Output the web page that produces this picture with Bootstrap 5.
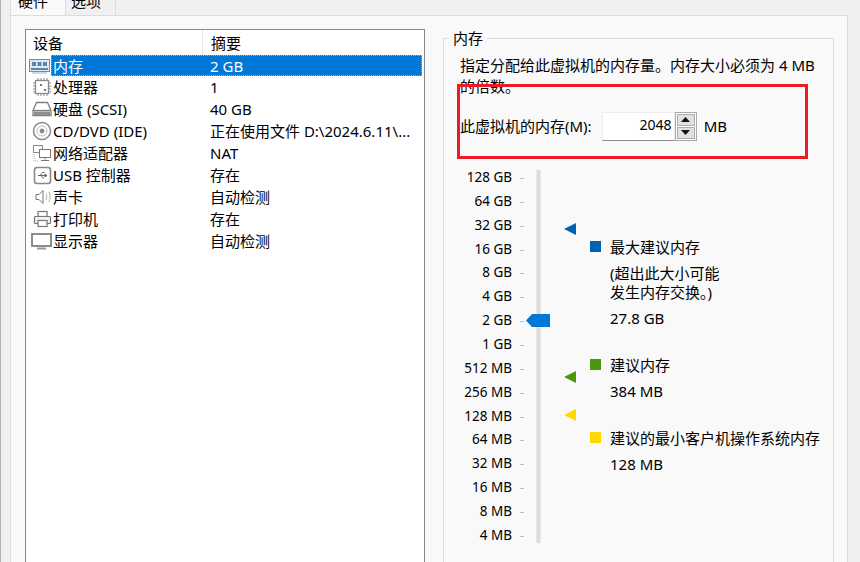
<!DOCTYPE html>
<html lang="zh">
<head>
<meta charset="utf-8">
<title>虚拟机设置</title>
<link href="https://cdn.jsdelivr.net/npm/bootstrap@5.3.0/dist/css/bootstrap.min.css" rel="stylesheet">
<style>
html,body{margin:0;height:562px;overflow:hidden;background:#f0f0f0;}
body{font-family:"Noto Sans","Noto Sans CJK SC",sans-serif;font-size:15px;line-height:20px;color:#000;}
.shell{width:860px;height:562px;position:relative;overflow:hidden;border-left:1px solid #b4b4b4;}
.tabstrip{height:15px;padding-left:9px;}
.vmtab{height:15px;line-height:0;padding:0 0 0 7px;border-right:1px solid #dcdcdc;overflow:visible;white-space:nowrap;}
.vmtab span{display:inline-block;transform:translateY(-6px);line-height:14px;}
.vmtab.on{width:56px;background:#f9f9f9;border-left:1px solid #dcdcdc;}
.vmtab.off{width:50px;padding-left:5px;}
.stage{width:838px;height:547px;margin-left:9px;background:#f9f9f9;border-left:1px solid #dcdcdc;border-right:1px solid #dcdcdc;padding:13px 0 0 14px;gap:18px;border-top:1px solid #dcdcdc;}
.devlist{width:400px;height:540px;background:#fff;border:1px solid #828790;flex:none;}
.devhead{height:25px;align-items:center;}
.devhead .c1{border-right:1px solid #e5e5e5;height:25px;line-height:26px;}
.c1{width:177px;padding-left:7px;flex:none;}
.c2{padding-left:8px;white-space:nowrap;}
.devrow{height:22px;line-height:22px;align-items:center;position:relative;}
.devrow .ic{width:27px;flex:none;height:22px;display:flex;align-items:center;justify-content:flex-end;padding-right:1px;}
.devrow .nm{width:157px;flex:none;white-space:nowrap;}
.devrow .vl{white-space:nowrap;}
.devrow.sel{background:#0078d7;color:#fff;outline:1px dotted #f5a623;outline-offset:-1px;margin-left:25px;padding-left:2px;height:21px;margin-right:2px;}
.devrow.sel .nm{width:157px;}
.selicon{position:absolute;left:-25px;top:0;width:25px;height:21px;display:flex;align-items:center;justify-content:flex-end;padding-right:1px;}
.memgroup{width:391px;height:540px;margin-top:9px;border:1px solid #dcdcdc;position:relative;padding:16px 15px 0 16px;flex:none;}
.grouptitle{position:absolute;left:5px;top:-11px;padding:0 4px;background:#f9f9f9;line-height:20px;}
.desc{width:360px;line-height:21px;height:42px;overflow:hidden;}
.memrow{margin-top:13px;height:32px;align-items:center;}
.spinbox{width:73px;height:29px;margin-left:10px;background:#fff;border:1px solid #eee;border-bottom:1px solid #8c8c8c;text-align:right;padding:0 2px 0 0;line-height:24px;font-size:14px;}
.spinbtns{width:22px;height:29px;border:1px solid #a9a9a9;background:#fff;padding:1px;gap:1px;flex:none;}
.spinbtns div{flex:1;background:#e1e1e1;border:1px solid #adadad;display:flex;align-items:center;justify-content:center;}
.unit{margin-left:7px;}
.chart{position:relative;height:390px;margin-top:28px;margin-left:-16px;}
.scale{position:absolute;left:0;top:-4px;width:80px;display:grid;grid-template-rows:repeat(16,23.87px);font-size:13.5px;}
.scale div{text-align:right;line-height:23.87px;white-space:nowrap;padding-right:12px;position:relative;}
.scale div::after{content:"";position:absolute;right:0;top:12px;width:4px;height:1px;background:#bdbdbd;}
.track{position:absolute;left:92px;top:0;width:5px;height:373px;background:#dcdcdc;border-left:1px solid #e8e8e8;border-right:1px solid #e8e8e8;}
.thumb{position:absolute;left:82px;top:144px;}
.ptr{position:absolute;left:120px;}
.legend{position:absolute;left:146px;top:67px;width:240px;}
.lgitem{padding-left:20px;position:relative;}
.swatch{position:absolute;left:0;top:4px;width:11px;height:11px;}
.sw-blue{background:#0063b1;}.sw-green{background:#4c980c;}.sw-yellow{background:#ffd800;}
.gap1{margin-top:7px;}
.gapv{margin-top:6px;}
.gaph{margin-top:27px;}
.note{line-height:19px;}
.alert-rect{position:absolute;left:456px;top:84px;width:351px;height:75px;border:3px solid #ed1c24;pointer-events:none;}
</style>
</head>
<body>
<div class="shell">
  <div class="tabstrip d-flex">
    <div class="vmtab on"><span>硬件</span></div>
    <div class="vmtab off"><span>选项</span></div>
  </div>
  <div class="stage d-flex">
    <div class="devlist">
      <div class="devhead d-flex"><div class="c1">设备</div><div class="c2">摘要</div></div>
      <div class="devrow sel d-flex">
        <div class="selicon"><svg width="21" height="16" viewBox="0 0 21 16"><rect x=".5" y="1.5" width="20" height="12" fill="#dceaf5" stroke="#6a8fb0"/><rect x="3" y="4" width="4" height="4" fill="#5b87ad"/><rect x="8.5" y="4" width="4" height="4" fill="#5b87ad"/><rect x="14" y="4" width="4" height="4" fill="#5b87ad"/><rect x="2" y="10" width="17" height="2" fill="#5b87ad"/><path d="M3 15h15" stroke="#9db4c7"/></svg></div>
        <div class="nm">内存</div><div class="vl">2 GB</div>
      </div>
      <div class="devrow d-flex"><div class="ic"><svg width="20" height="20" viewBox="0 0 20 20" fill="none" stroke="#8a8a8a"><rect x="3.500" y="3.500" width="13" height="13" stroke-width="1.300"/><path d="M6 1v2M9 1v2M12 1v2M15 1v2M6 17v2M9 17v2M12 17v2M15 17v2M1 6h2M1 9h2M1 12h2M1 15h2M17 6h2M17 9h2M17 12h2M17 15h2"/><rect x="8" y="7" width="2" height="2" fill="#777" stroke="none"/><rect x="12" y="12" width="2" height="2" fill="#777" stroke="none"/></svg></div><div class="nm">处理器</div><div class="vl">1</div></div>
      <div class="devrow d-flex"><div class="ic"><svg width="20" height="16" viewBox="0 0 20 16" fill="none" stroke="#808080" stroke-width="1.300"><path d="M4.500 1.500h11l3.500 8v5H1v-5z" fill="#fff"/><path d="M1 9.500h18"/><rect x="2" y="10.500" width="16" height="3.500" fill="#8f8f8f" stroke="none"/></svg></div><div class="nm">硬盘 (SCSI)</div><div class="vl">40 GB</div></div>
      <div class="devrow d-flex"><div class="ic"><svg width="20" height="20" viewBox="0 0 20 20" fill="none" stroke="#888"><circle cx="10" cy="10" r="8.500" stroke-width="1.500"/><circle cx="10" cy="10" r="5" stroke="#bbb"/><circle cx="10" cy="10" r="2" fill="#888"/></svg></div><div class="nm">CD/DVD (IDE)</div><div class="vl">正在使用文件 D:\2024.6.11\...</div></div>
      <div class="devrow d-flex"><div class="ic"><svg width="20" height="20" viewBox="0 0 20 20" fill="none" stroke="#777"><rect x="1.500" y="2.500" width="9" height="7" stroke="#888"/><rect x="7.500" y="6.500" width="11" height="8" fill="#fff"/><path d="M13 14.500v2M9 17.500h8"/><path d="M2 11v7h4" stroke="#aaa" stroke-dasharray="1 1"/></svg></div><div class="nm">网络适配器</div><div class="vl">NAT</div></div>
      <div class="devrow d-flex"><div class="ic"><svg width="19" height="19" viewBox="0 0 19 19" fill="none" stroke="#888"><rect x="1.500" y="1.500" width="16" height="16" rx="2.500" stroke-width="1.600"/><path d="M5 9.500h9M14 9.500l-2-1.500v3zM7 9.500l2.500-3h2M8 9.500l2 2.500h1" stroke="#666"/></svg></div><div class="nm">USB 控制器</div><div class="vl">存在</div></div>
      <div class="devrow d-flex"><div class="ic"><svg width="18" height="16" viewBox="0 0 18 16" fill="none" stroke="#777"><path d="M2 5.500h3l4-4v13l-4-4H2z" fill="#fff"/><path d="M12 5c1 2 1 4 0 6M15 3c1.500 3 1.500 7 0 10" stroke="#aaa"/></svg></div><div class="nm">声卡</div><div class="vl">自动检测</div></div>
      <div class="devrow d-flex"><div class="ic"><svg width="19" height="18" viewBox="0 0 19 18" fill="none" stroke="#777" stroke-width="1.200"><rect x="5" y="1.500" width="9" height="5" fill="#fff"/><rect x="1.500" y="6.500" width="16" height="7" rx="1" fill="#f2f2f2"/><rect x="5" y="10.500" width="9" height="6" fill="#fff"/></svg></div><div class="nm">打印机</div><div class="vl">存在</div></div>
      <div class="devrow d-flex"><div class="ic"><svg width="21" height="17" viewBox="0 0 21 17" fill="none" stroke="#808080"><rect x="1" y="1" width="19" height="12" fill="#fff" stroke-width="1.800"/><path d="M6 15.500h9" stroke="#999" stroke-width="2"/></svg></div><div class="nm">显示器</div><div class="vl">自动检测</div></div>
    </div>
    <div class="memgroup">
      <div class="grouptitle">内存</div>
      <div class="desc">指定分配给此虚拟机的内存量。内存大小必须为 4 MB 的倍数。</div>
      <div class="memrow d-flex">
        <div>此虚拟机的内存(M):</div>
        <div class="spinbox">2048</div>
        <div class="spinbtns d-flex flex-column">
          <div><svg width="9" height="5" viewBox="0 0 9 5"><path d="M4.500 0 9 5H0z" fill="#111"/></svg></div>
          <div><svg width="9" height="5" viewBox="0 0 9 5"><path d="M0 0h9L4.500 5z" fill="#111"/></svg></div>
        </div>
        <div class="unit">MB</div>
      </div>
      <div class="chart">
        <div class="scale">
          <div>128 GB</div><div>64 GB</div><div>32 GB</div><div>16 GB</div><div>8 GB</div><div>4 GB</div><div>2 GB</div><div>1 GB</div><div>512 MB</div><div>256 MB</div><div>128 MB</div><div>64 MB</div><div>32 MB</div><div>16 MB</div><div>8 MB</div><div>4 MB</div>
        </div>
        <div class="track"></div>
        <svg class="thumb" width="24" height="13" viewBox="0 0 24 13"><path d="M0 6.500 6 0h18v13H6z" fill="#0078d7"/></svg>
        <svg class="ptr" style="top:53px" width="12" height="12" viewBox="0 0 12 12"><path d="M0 6 12 0v12z" fill="#0063b1"/></svg>
        <svg class="ptr" style="top:201px" width="12" height="12" viewBox="0 0 12 12"><path d="M0 6 12 0v12z" fill="#4c980c"/></svg>
        <svg class="ptr" style="top:239px" width="12" height="12" viewBox="0 0 12 12"><path d="M0 6 12 0v12z" fill="#ffd800"/></svg>
        <div class="legend">
          <div class="lgitem"><span class="swatch sw-blue"></span>最大建议内存</div>
          <div class="lgitem note gap1">(超出此大小可能<br>发生内存交换。)</div>
          <div class="lgitem gapv">27.8 GB</div>
          <div class="lgitem gaph"><span class="swatch sw-green"></span>建议内存</div>
          <div class="lgitem gapv">384 MB</div>
          <div class="lgitem gaph"><span class="swatch sw-yellow"></span>建议的最小客户机操作系统内存</div>
          <div class="lgitem gapv">128 MB</div>
        </div>
      </div>
    </div>
  </div>
  <div class="alert-rect"></div>
</div>
</body>
</html>
